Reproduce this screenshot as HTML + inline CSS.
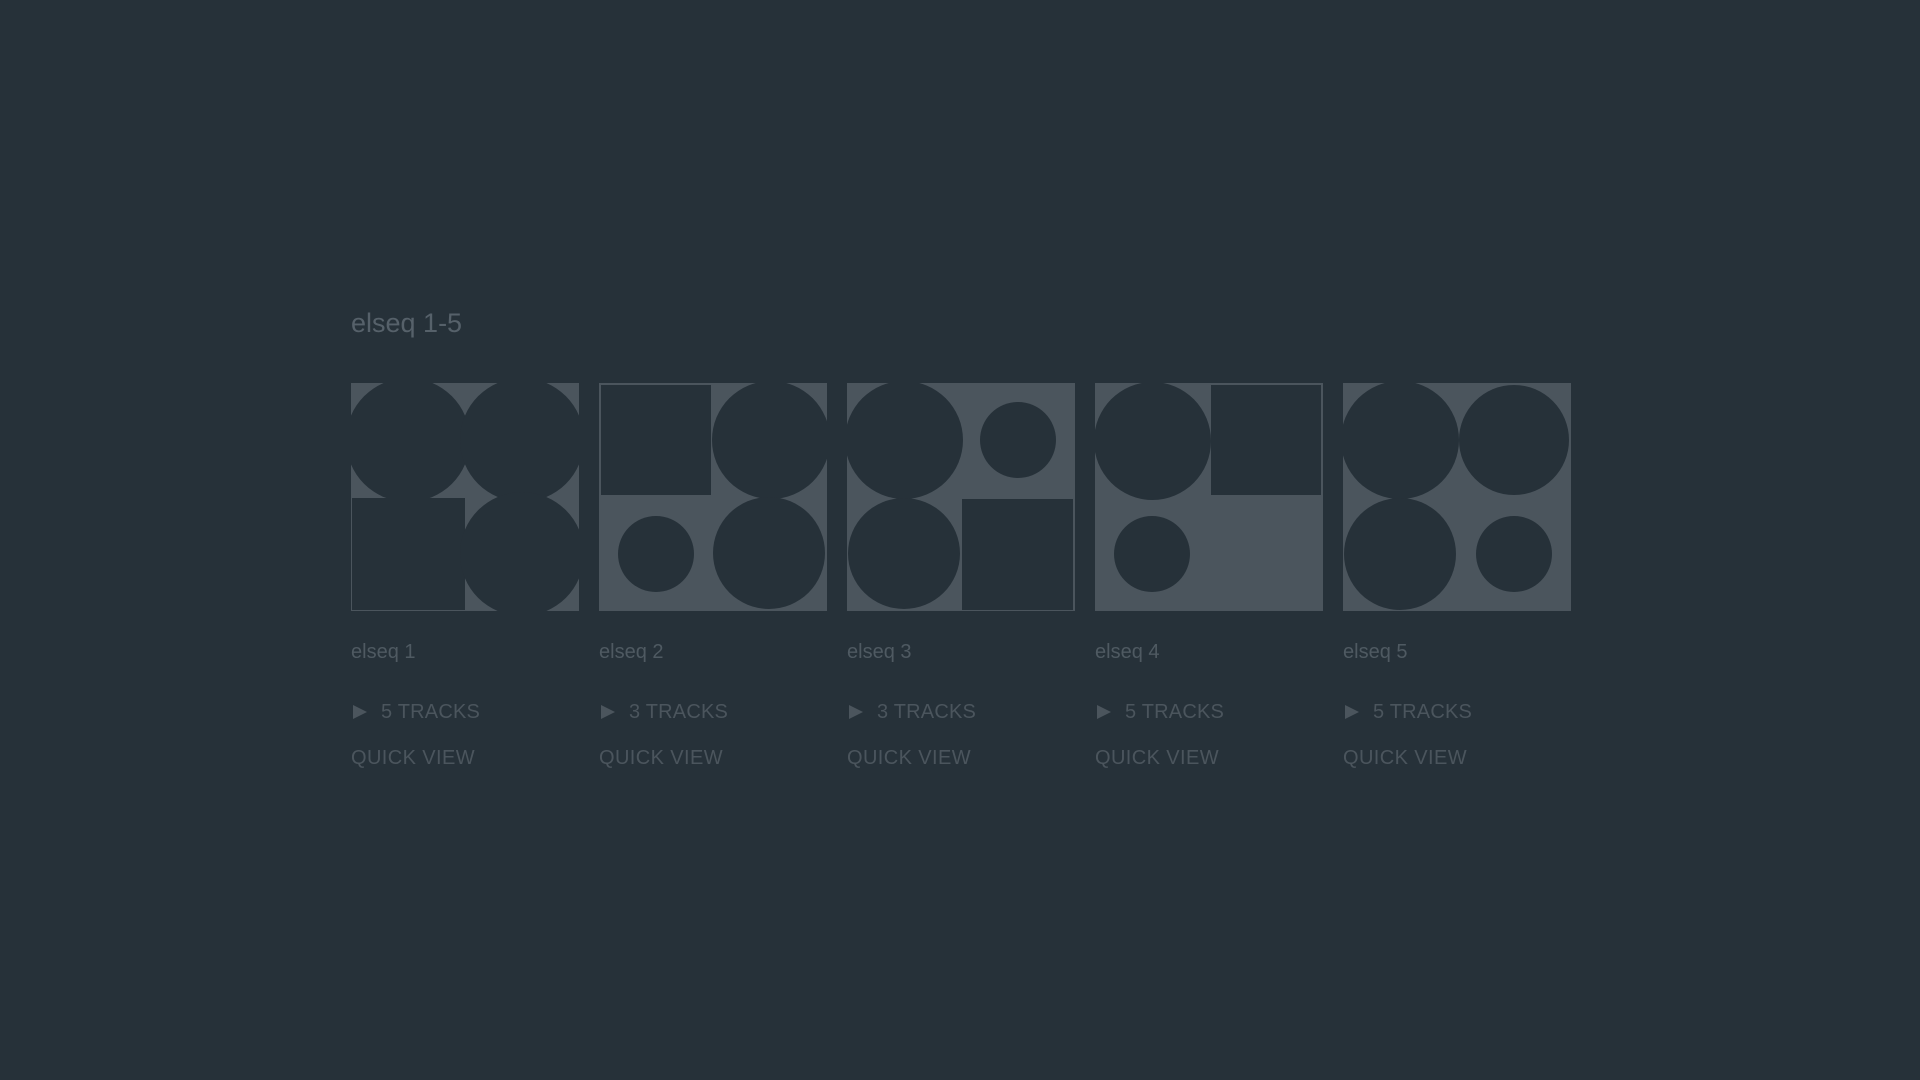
<!DOCTYPE html>
<html><head><meta charset="utf-8"><style>
html,body{margin:0;padding:0;}
body{width:1920px;height:1080px;background:#263139;position:relative;overflow:hidden;font-family:"Liberation Sans",sans-serif;}
.t{position:absolute;white-space:nowrap;}
.title{left:351px;top:308px;font-size:27px;color:#56616a;}
.tile{position:absolute;top:383px;width:228px;height:228px;background:#4b555d;overflow:hidden;}
.c{position:absolute;width:114px;height:114px;border-radius:50%;background:#263139;}
.q{position:absolute;background:#263139;}
.lab{font-size:20px;color:#4f5a62;}
.tr{font-size:20px;color:#4b555d;letter-spacing:0.2px;}
.qv{font-size:20px;color:#4b555d;letter-spacing:0.4px;}
.tri{position:absolute;width:0;height:0;border-left:14px solid #4b555d;border-top:7px solid transparent;border-bottom:7px solid transparent;}
</style></head><body>
<div class="t title">elseq 1-5</div>

<!-- tile 1 -->
<div class="tile" style="left:351px">
<div class="c" style="left:-5px;top:-5px;width:124px;height:124px"></div>
<div class="c" style="left:109px;top:-5px;width:124px;height:124px"></div>
<div class="q" style="left:1px;top:115px;width:113px;height:112px"></div>
<div class="c" style="left:109px;top:109px;width:124px;height:124px"></div>
</div>
<!-- tile 2 -->
<div class="tile" style="left:599px">
<div class="q" style="left:2px;top:2px;width:110px;height:110px"></div>
<div class="c" style="left:113px;top:-2px;width:118px;height:118px"></div>
<div class="c" style="left:19px;top:133px;width:76px;height:76px"></div>
<div class="c" style="left:114px;top:114px;width:112px;height:112px"></div>
</div>
<!-- tile 3 -->
<div class="tile" style="left:847px">
<div class="c" style="left:-2px;top:-2px;width:118px;height:118px"></div>
<div class="c" style="left:133px;top:19px;width:76px;height:76px"></div>
<div class="c" style="left:1px;top:115px;width:112px;height:111px"></div>
<div class="q" style="left:115px;top:116px;width:111px;height:111px"></div>
</div>
<!-- tile 4 -->
<div class="tile" style="left:1095px">
<div class="c" style="left:-1px;top:-1px;width:117px;height:118px"></div>
<div class="q" style="left:116px;top:2px;width:110px;height:110px"></div>
<div class="c" style="left:19px;top:133px;width:76px;height:76px"></div>
</div>
<!-- tile 5 -->
<div class="tile" style="left:1343px">
<div class="c" style="left:-2px;top:-2px;width:118px;height:118px"></div>
<div class="c" style="left:116px;top:2px;width:110px;height:110px"></div>
<div class="c" style="left:1px;top:115px;width:112px;height:112px"></div>
<div class="c" style="left:133px;top:133px;width:76px;height:76px"></div>
</div>

<div class="t lab" style="left:351px;top:641px">elseq 1</div>
<div class="t lab" style="left:599px;top:641px">elseq 2</div>
<div class="t lab" style="left:847px;top:641px">elseq 3</div>
<div class="t lab" style="left:1095px;top:641px">elseq 4</div>
<div class="t lab" style="left:1343px;top:641px">elseq 5</div>

<div class="tri" style="left:353px;top:705px"></div>
<div class="tri" style="left:601px;top:705px"></div>
<div class="tri" style="left:849px;top:705px"></div>
<div class="tri" style="left:1097px;top:705px"></div>
<div class="tri" style="left:1345px;top:705px"></div>
<div class="t tr" style="left:381px;top:701px">5 TRACKS</div>
<div class="t tr" style="left:629px;top:701px">3 TRACKS</div>
<div class="t tr" style="left:877px;top:701px">3 TRACKS</div>
<div class="t tr" style="left:1125px;top:701px">5 TRACKS</div>
<div class="t tr" style="left:1373px;top:701px">5 TRACKS</div>

<div class="t qv" style="left:351px;top:747px">QUICK VIEW</div>
<div class="t qv" style="left:599px;top:747px">QUICK VIEW</div>
<div class="t qv" style="left:847px;top:747px">QUICK VIEW</div>
<div class="t qv" style="left:1095px;top:747px">QUICK VIEW</div>
<div class="t qv" style="left:1343px;top:747px">QUICK VIEW</div>
</body></html>
